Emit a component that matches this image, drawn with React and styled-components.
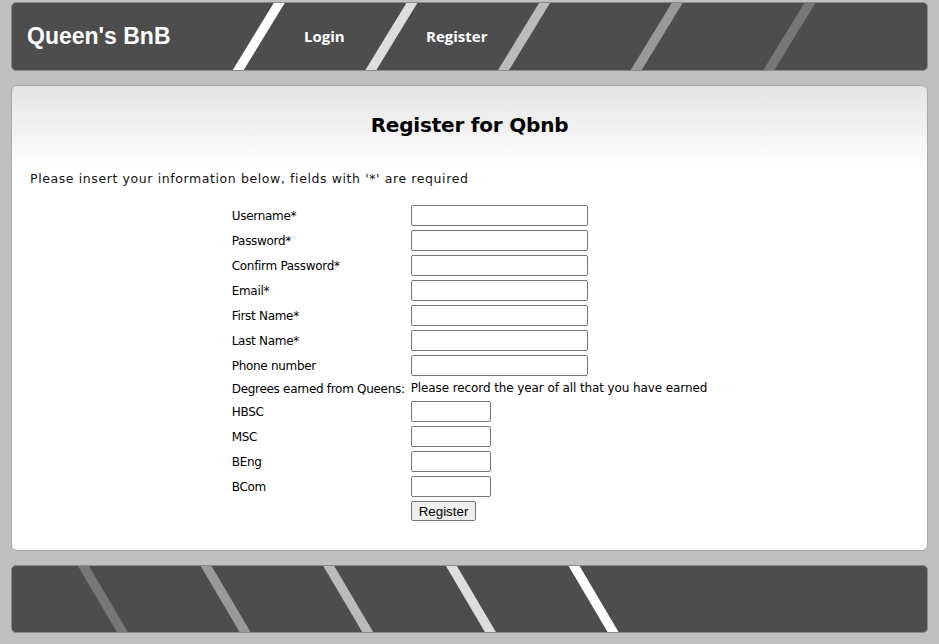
import React from "react";
import styled, { createGlobalStyle } from "styled-components";

const GlobalStyle = createGlobalStyle`
	html, body {
		margin: 0;
		background: #c0c0c0;
	}
`

const Page = styled.div`
	padding: 2px 11px 11px;
	font-family: "DejaVu Sans", sans-serif;
`

const Band = styled.div`
	position: relative;
	box-sizing: border-box;
	height: ${props => props.h}px;
	background: #4d4d4d;
	border: 1px solid #8a8a8a;
	border-radius: 5px;
	overflow: hidden;
	margin-top: ${props => props.mt || 0}px;
`

const Stripes = styled.svg`
	position: absolute;
	inset: 0;
	width: 100%;
	height: 100%;
	pointer-events: none;
`

const NavBar = styled.nav`
	position: relative;
	z-index: 1;
	display: flex;
	align-items: center;
	height: 100%;
	padding-left: 15px;
	padding-bottom: 1px;
	box-sizing: border-box;
`

const Brand = styled.div`
	width: 277px;
	font-family: "Liberation Sans", Arial, sans-serif;
	font-weight: bold;
	font-size: 23px;
	color: #fff;
`

const NavLink = styled.a`
	width: 122px;
	font-family: "Open Sans", sans-serif;
	font-weight: bold;
	font-size: 15px;
	color: #fff;
	text-decoration: none;
	cursor: pointer;
`

const Panel = styled.main`
	margin-top: 14px;
	padding: 0 18px 26px;
	background: linear-gradient(#e4e4e4 0, #ffffff 82px);
	border: 1px solid #a9a9a9;
	border-radius: 6px;
`

const Title = styled.h1`
	margin: 27px 0 0;
	text-align: center;
	font-size: 20px;
	letter-spacing: -0.2px;
	line-height: 24px;
	color: #000;
`

const Intro = styled.p`
	margin: 34px 0 0;
	font-size: 12.5px;
	letter-spacing: 0.6px;
	line-height: 15px;
	color: #111;
`

const Form = styled.table`
	margin: 16px auto 0;
	border-spacing: 2px;
	font-size: 12px;
	letter-spacing: -0.3px;
	color: #000;
`

const Label = styled.td`
	width: 175px;
	padding: 2px 1px 0;
	line-height: 17px;
	vertical-align: middle;
	white-space: nowrap;
`

const Cell = styled.td`
	padding: 1px;
	line-height: 17px;
	vertical-align: middle;
	white-space: nowrap;
	letter-spacing: -0.1px;
`

const Field = styled.input`
	display: block;
	box-sizing: border-box;
	width: ${props => props.w}px;
	height: 21px;
	margin: 0;
	border: 1px solid #767676;
	border-radius: 2px;
	background: #fff;
`

const Submit = styled.button`
	display: block;
	box-sizing: border-box;
	height: 20px;
	padding: 0 7px;
	font-family: "Liberation Sans", Arial, sans-serif;
	font-size: 13.33px;
	letter-spacing: 0;
	color: #000;
	background: #efefef;
	border: 1px solid #767676;
	border-radius: 2px;
`

const topStripes = ["#ffffff", "#dddddd", "#bbbbbb", "#999999", "#777777"]
const bottomStripes = ["#777777", "#999999", "#bbbbbb", "#dddddd", "#ffffff"]

const HeaderArt = () => (
	<Stripes viewBox="0 0 916 67" preserveAspectRatio="none">
		{topStripes.map((c, i) => {
			const b = 221 + i * 132.8
			return <polygon key={i} fill={c} points={`${b},67 ${b + 11},67 ${b + 52},0 ${b + 41},0`} />
		})}
	</Stripes>
)

const FooterArt = () => (
	<Stripes viewBox="0 0 916 66" preserveAspectRatio="none">
		{bottomStripes.map((c, i) => {
			const t = 66 + i * 122.8
			return <polygon key={i} fill={c} points={`${t},0 ${t + 11},0 ${t + 50},66 ${t + 39},66`} />
		})}
	</Stripes>
)

const required = ["Username", "Password", "Confirm Password", "Email", "First Name", "Last Name"]
const degrees = ["HBSC", "MSC", "BEng", "BCom"]

const App = () => {
	return (
		<Page>
			<GlobalStyle />
			<Band h={69}>
				<HeaderArt />
				<NavBar>
					<Brand>Queen's BnB</Brand>
					<NavLink>Login</NavLink>
					<NavLink>Register</NavLink>
				</NavBar>
			</Band>
			<Panel>
				<Title>Register for Qbnb</Title>
				<Intro>Please insert your information below, fields with '*' are required</Intro>
				<Form>
					<tbody>
						{required.map(name => (
							<tr key={name}>
								<Label>{name}*</Label>
								<Cell><Field w={177} type={name.includes("Password") ? "password" : "text"} /></Cell>
							</tr>
						))}
						<tr>
							<Label>Phone number</Label>
							<Cell><Field w={177} type="text" /></Cell>
						</tr>
						<tr>
							<Label>Degrees earned from Queens:</Label>
							<Cell>Please record the year of all that you have earned</Cell>
						</tr>
						{degrees.map(d => (
							<tr key={d}>
								<Label>{d}</Label>
								<Cell><Field w={80} type="text" /></Cell>
							</tr>
						))}
						<tr>
							<Label />
							<Cell><Submit type="submit">Register</Submit></Cell>
						</tr>
					</tbody>
				</Form>
			</Panel>
			<Band h={68} mt={14}>
				<FooterArt />
			</Band>
		</Page>
	)
}

export default App
